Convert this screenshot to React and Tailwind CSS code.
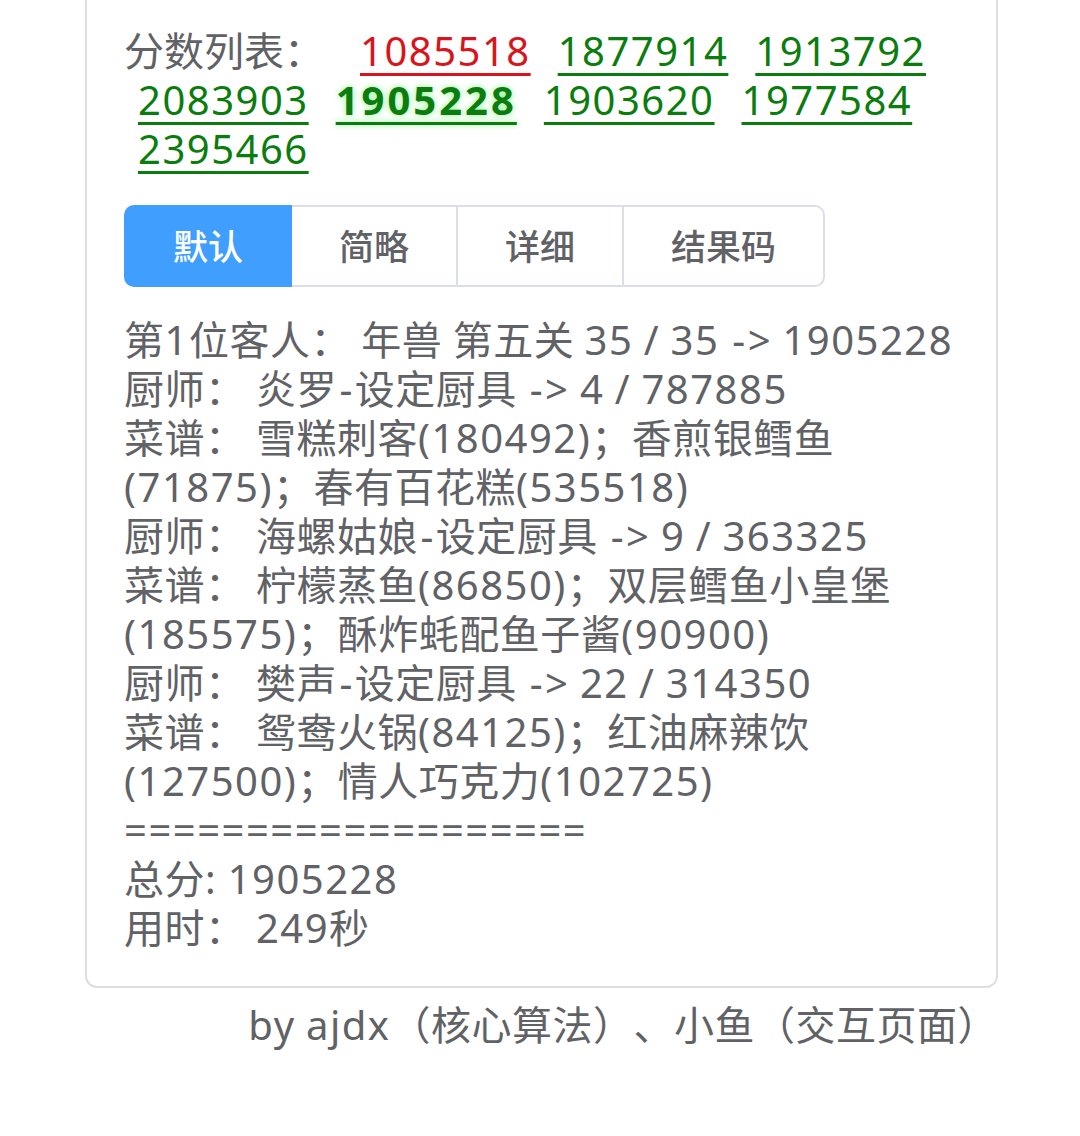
const scores = [
  { value: "1085518", tone: "red" },
  { value: "1877914" },
  { value: "1913792" },
  { value: "2083903" },
  { value: "1905228", current: true },
  { value: "1903620" },
  { value: "1977584" },
  { value: "2395466" },
];

const tabs = ["默认", "简略", "详细", "结果码"];

const resultLines = [
  "第1位客人： 年兽 第五关 35 / 35 -> 1905228",
  "厨师： 炎罗-设定厨具 -> 4 / 787885",
  "菜谱： 雪糕刺客(180492)；香煎银鳕鱼",
  "(71875)；春有百花糕(535518)",
  "厨师： 海螺姑娘-设定厨具 -> 9 / 363325",
  "菜谱： 柠檬蒸鱼(86850)；双层鳕鱼小皇堡",
  "(185575)；酥炸蚝配鱼子酱(90900)",
  "厨师： 樊声-设定厨具 -> 22 / 314350",
  "菜谱： 鸳鸯火锅(84125)；红油麻辣饮",
  "(127500)；情人巧克力(102725)",
  "===================",
  "总分: 1905228",
  "用时： 249秒",
];

// the phone font is a touch wider than Noto Sans, mostly on latin glyphs
const RUNS = /([\u3000-\u303f\u3400-\u9fff\uff00-\uffef]+| +|-)/;
const CJK = /^[\u3000-\u303f\u3400-\u9fff\uff00-\uffef]+$/;
const Mixed = ({ text }) =>
  text.split(RUNS).map((part, i) => {
    if (!part) return null;
    if (CJK.test(part))
      return (
        <span key={i} className="tracking-[0.5px]">
          {part}
        </span>
      );
    if (part.trim() === "") return <span key={i}>{part}</span>;
    if (part === "-")
      return (
        <span key={i} className="mx-[2.5px]">
          -
        </span>
      );
    return (
      <span key={i} className="tracking-[1.5px]">
        {part}
      </span>
    );
  });

const ScoreLink = ({ value, tone, current }) => {
  const color = tone === "red" ? "text-[#d8141c]" : "text-[#0b7d0e]";
  return (
    <a
      href="#"
      className={`ml-[14px] mr-[13px] underline decoration-[3px] underline-offset-[7px] ${color} ${
        current
          ? "font-bold tracking-[3px] [text-shadow:0_0_6px_#8df58d]"
          : "tracking-[1.5px]"
      }`}
    >
      {value}
    </a>
  );
};

const Tabs = ({ active = 0 }) => (
  <div className="mt-[32px] inline-flex">
    {tabs.map((t, i) => (
      <button
        key={t}
        className={`h-[82px] px-[47px] text-[35px] font-medium border-y-2 border-r-2 ${
          i === 0 ? "border-l-2 rounded-l-[10px]" : ""
        } ${i === tabs.length - 1 ? "rounded-r-[10px]" : ""} ${
          i === active
            ? "bg-[#409eff] border-[#409eff] text-white"
            : "bg-white border-[#dcdfe6] text-[#606266]"
        }`}
      >
        {t}
      </button>
    ))}
  </div>
);

export default function App() {
  return (
    <div className="min-h-[1136px] bg-white font-['Noto_Sans','Noto_Sans_CJK_SC',sans-serif] text-[40px] leading-[49px] text-[#606266] [text-spacing-trim:space-all]">
      <div className="ml-[85px] w-[913px] -mt-[14px] rounded-[12px] border-2 border-[#dedede] px-[37px] pt-[38px] pb-[34px]">
        <div className="flex flex-wrap">
          <span className="mr-[22px]">分数列表：</span>
          {scores.map((s) => (
            <ScoreLink key={s.value} {...s} />
          ))}
        </div>

        <Tabs />

        <div className="mt-[28px]">
          {resultLines.map((line, i) => (
            <div key={i} className="whitespace-pre">
              <Mixed text={line} />
            </div>
          ))}
        </div>
      </div>

      <div className="ml-[85px] w-[913px] mt-[12px] text-right">
        <Mixed text="by ajdx（核心算法）、小鱼（交互页面）" />
      </div>
    </div>
  );
}
